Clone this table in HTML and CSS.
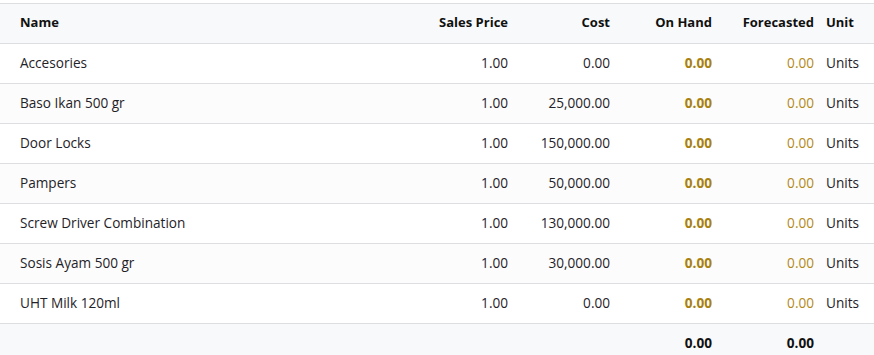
FILE: index.html
```html
<!DOCTYPE html>
<html lang="en">
<head>
    <meta charset="UTF-8">
    <title>Products</title>
    <link rel="stylesheet" href="styles.css">
</head>
<body>
    <table class="list">
        <colgroup>
            <col>
            <col class="col-price">
            <col class="col-num">
            <col class="col-num">
            <col class="col-num">
            <col class="col-unit">
        </colgroup>
        <thead>
            <tr>
                <th class="name">Name</th>
                <th class="num">Sales Price</th>
                <th class="num">Cost</th>
                <th class="num">On Hand</th>
                <th class="num">Forecasted</th>
                <th class="unit">Unit</th>
            </tr>
        </thead>
        <tbody>
            <tr>
                <td class="name">Accesories</td>
                <td class="num">1.00</td>
                <td class="num">0.00</td>
                <td class="num onhand">0.00</td>
                <td class="num forecast">0.00</td>
                <td class="unit">Units</td>
            </tr>
            <tr>
                <td class="name">Baso Ikan 500 gr</td>
                <td class="num">1.00</td>
                <td class="num">25,000.00</td>
                <td class="num onhand">0.00</td>
                <td class="num forecast">0.00</td>
                <td class="unit">Units</td>
            </tr>
            <tr>
                <td class="name">Door Locks</td>
                <td class="num">1.00</td>
                <td class="num">150,000.00</td>
                <td class="num onhand">0.00</td>
                <td class="num forecast">0.00</td>
                <td class="unit">Units</td>
            </tr>
            <tr>
                <td class="name">Pampers</td>
                <td class="num">1.00</td>
                <td class="num">50,000.00</td>
                <td class="num onhand">0.00</td>
                <td class="num forecast">0.00</td>
                <td class="unit">Units</td>
            </tr>
            <tr>
                <td class="name">Screw Driver Combination</td>
                <td class="num">1.00</td>
                <td class="num">130,000.00</td>
                <td class="num onhand">0.00</td>
                <td class="num forecast">0.00</td>
                <td class="unit">Units</td>
            </tr>
            <tr>
                <td class="name">Sosis Ayam 500 gr</td>
                <td class="num">1.00</td>
                <td class="num">30,000.00</td>
                <td class="num onhand">0.00</td>
                <td class="num forecast">0.00</td>
                <td class="unit">Units</td>
            </tr>
            <tr>
                <td class="name">UHT Milk 120ml</td>
                <td class="num">1.00</td>
                <td class="num">0.00</td>
                <td class="num onhand">0.00</td>
                <td class="num forecast">0.00</td>
                <td class="unit">Units</td>
            </tr>
        </tbody>
        <tfoot>
            <tr>
                <td class="name"></td>
                <td class="num"></td>
                <td class="num"></td>
                <td class="num">0.00</td>
                <td class="num">0.00</td>
                <td class="unit"></td>
            </tr>
        </tfoot>
    </table>
</body>
</html>
```

FILE: styles.css
```css
body {
    margin: 0;
    padding: 3px 0 0;
    background: white;
    font-family: 'Open Sans', sans-serif;
    font-size: 13.6px;
    color: #1f2328;
}
.list {
    width: 100%;
    table-layout: fixed;
    border-collapse: separate;
    border-spacing: 0;
}
.col-price {
    width: 84px;
}
.col-num {
    width: 102px;
}
.col-unit {
    width: 54px;
}
th, td {
    padding: 0 6px 2px;
    line-height: 37px;
    white-space: nowrap;
    border-bottom: 1px solid #dcdee1;
}
th {
    background: #f8f9fa;
    border-top: 1px solid #dcdee1;
    font-size: 13px;
    font-weight: bold;
    color: #111;
}
.name {
    padding-left: 20px;
    text-align: left;
}
.num {
    text-align: right;
}
.unit {
    text-align: left;
}
tbody tr:nth-child(even) td {
    background: #fcfcfc;
}
.onhand {
    font-weight: bold;
    color: #a8800e;
}
.forecast {
    color: #b38a1a;
}
tfoot td {
    background: #f8f9fa;
    border-bottom: none;
    font-weight: bold;
    color: #111;
}
```
